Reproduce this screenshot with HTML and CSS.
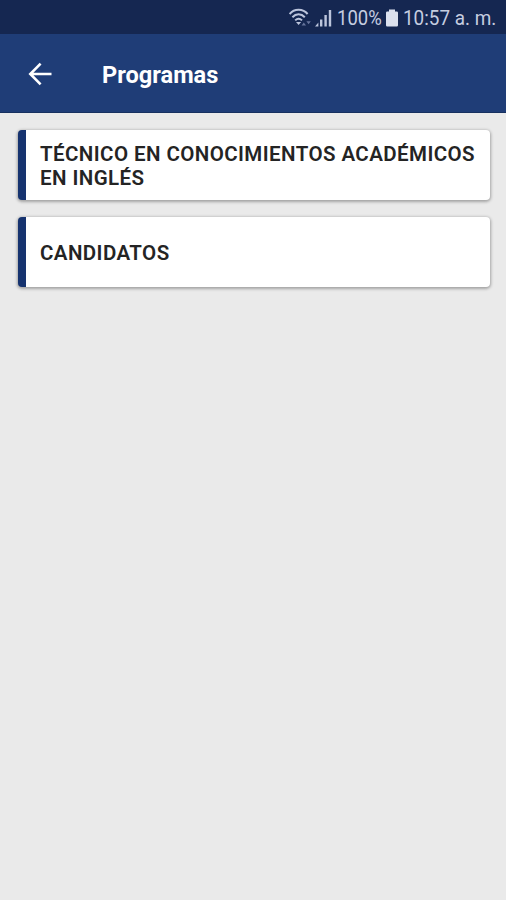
FILE: index.html
```html
<!DOCTYPE html>
<html lang="es">
<head>
  <meta charset="UTF-8" />
  <meta name="viewport" content="width=device-width, initial-scale=1.0" />
  <title>Programas</title>
  <link rel="stylesheet" href="styles.css">
</head>
<body>
  <div class="status-bar">
    <svg class="wifi" width="24" height="20" viewBox="0 0 24 20">
      <g fill="none" stroke="#bcc5dc" stroke-width="2">
        <path d="M0.6 6 C5.2 0.4 14 0.4 18.6 6" />
        <path d="M3.4 9.2 C7 5.4 12.2 5.4 15.8 9.2" />
        <path d="M6.2 12.4 C8.4 10.2 10.8 10.2 13 12.4" />
      </g>
      <path d="M7 14 L12.2 14 L9.6 17 Z" fill="#bcc5dc" />
      <path d="M12.6 17.4 L14.8 14.4 L17 17.4 Z M17.4 13.2 L21.8 13.2 L19.6 16.2 Z" fill="#66749b" />
    </svg>
    <svg class="signal" width="18" height="18" viewBox="0 0 18 18" fill="#bcc5dc">
      <path d="M0 17.5 L3.4 13.6 V17.5 Z" />
      <rect x="5" y="10.5" width="2.4" height="7" />
      <rect x="9.4" y="6" width="2.4" height="11.5" />
      <rect x="13.8" y="1" width="2.4" height="16.5" />
    </svg>
    <span class="porcentaje">100%</span>
    <svg class="bateria" width="12" height="18" viewBox="0 0 12 18">
      <path d="M3 0.5 H9 V2.5 H10.8 Q12 2.5 12 3.7 V16.3 Q12 17.5 10.8 17.5 H1.2 Q0 17.5 0 16.3 V3.7 Q0 2.5 1.2 2.5 H3 Z" fill="#dce1ee" />
    </svg>
    <span class="hora">10:57 a. m.</span>
  </div>

  <header>
    <svg class="volver" width="24" height="24" viewBox="0 0 24 24">
      <path d="M23.5 12 H2 M12.6 1.7 L2.3 12 L12.6 22.3" fill="none" stroke="#fff" stroke-width="2.6" />
    </svg>
    <h1>Programas</h1>
  </header>

  <main class="lista">
    <div class="programa"><h2>TÉCNICO EN CONOCIMIENTOS ACADÉMICOS EN INGLÉS</h2></div>
    <div class="programa"><h2>CANDIDATOS</h2></div>
  </main>
</body>
</html>
```
FILE: styles.css
```css
* {
  margin: 0;
  padding: 0;
  box-sizing: border-box;
}

body {
  min-height: 100vh;
  background-color: #eaeaea;
  font-family: Roboto, sans-serif;
}

/* Barra de estado */
.status-bar {
  display: flex;
  align-items: center;
  justify-content: flex-end;
  height: 34px;
  padding: 2px 10px 0 0;
  background-color: #152751;
  color: #c5cde0;
  font-size: 21px;
  white-space: nowrap;
}

.signal {
  margin-left: 2px;
}

/* texto condensado */
.porcentaje,
.hora {
  transform: scaleX(0.9);
  transform-origin: left center;
}

.porcentaje {
  width: 45px;
  margin-left: 4px;
  transform: scaleX(0.88);
}

.bateria {
  margin-left: 4px;
}

.hora {
  width: 93px;
  margin-left: 5px;
}

header {
  display: flex;
  align-items: center;
  height: 79px;
  padding: 1px 28px 0;
  background-color: #1f3d77;
  border-bottom: 1px solid #17305f;
  color: #fff;
}

header h1 {
  margin: 3px 0 0 50px;
  font-size: 23.6px;
  font-weight: 700;
}

/* Lista de programas */
.lista {
  display: flex;
  flex-direction: column;
  gap: 17px;
  padding: 17px 16px 17px 18px;
}

.programa {
  display: flex;
  align-items: center;
  height: 70px;
  padding: 2px 8px 0 14px;
  background-color: #fff;
  border-left: 8px solid #16336f;
  border-radius: 4px;
  box-shadow: 0 1px 3px 1px rgba(0, 0, 0, 0.3);
}

.programa h2 {
  color: #242424;
  font-size: 20.5px;
  font-weight: 600;
  letter-spacing: 0.42px;
  line-height: 24px;
}
```
